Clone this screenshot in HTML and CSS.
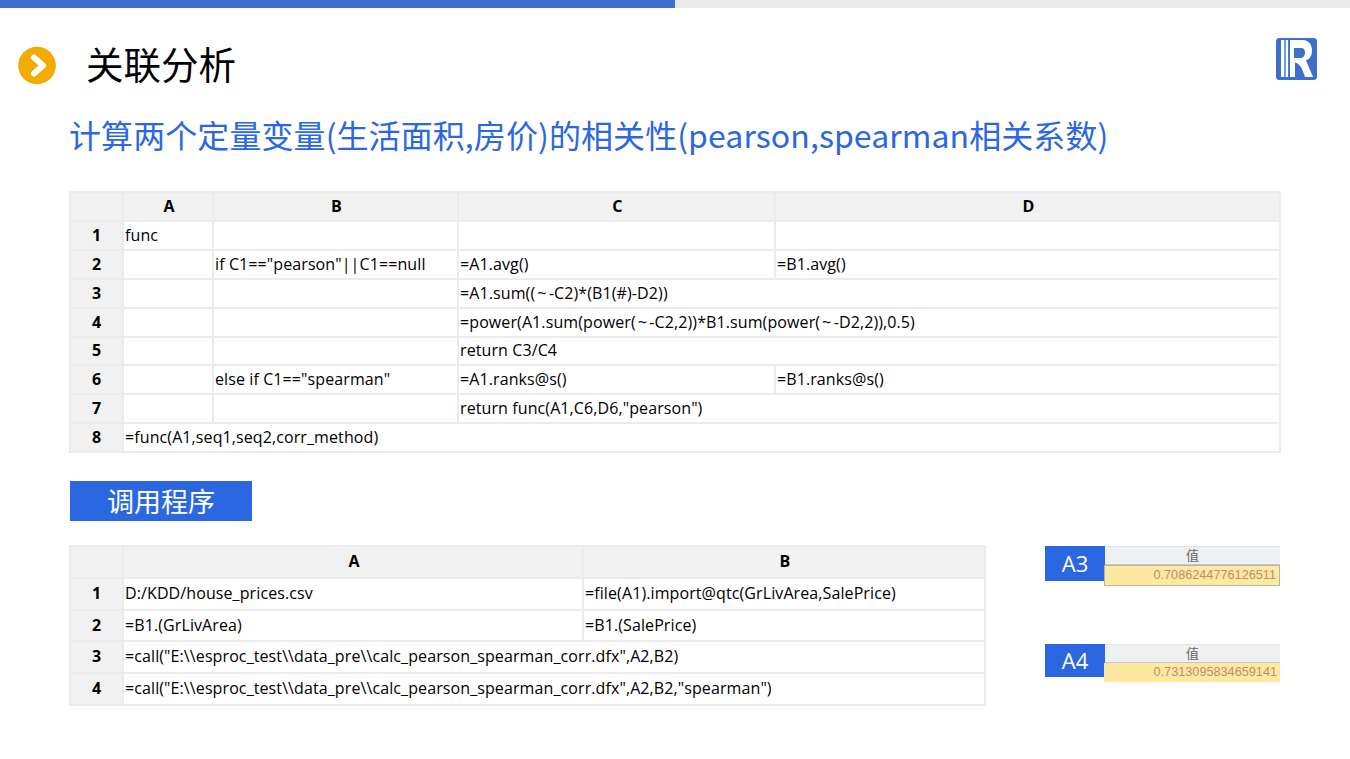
FILE: index.html
```html
<!DOCTYPE html>
<html lang="zh">
<head>
<meta charset="utf-8">
<title>关联分析</title>
<link rel="stylesheet" href="styles.css">
</head>
<body>
<div class="progress"><div class="progress-fill"></div></div>
<header class="head">
  <svg class="bullet" viewBox="0 0 38 38" aria-hidden="true"><circle cx="19" cy="18.500" r="18.800" fill="#f2ab00"/><path d="M16 10.500 L25 18.500 L16 26.500" fill="none" stroke="#fff" stroke-width="6" stroke-linecap="round" stroke-linejoin="round"/></svg>
  <h1 class="title">关联分析</h1>
  <svg class="logo" viewBox="0 0 41 42" aria-hidden="true"><rect width="41" height="42" rx="3.500" fill="#3c6fcb"/><rect x="5" y="2" width="3.300" height="37" fill="#fff"/><rect x="9.700" y="2" width="2.400" height="37" fill="#fff"/><path fill-rule="evenodd" d="M14 2 H27 C33 2 36 7 36 13 C36 18 33.500 21 30 22.500 L37 39 H29 C27 33 25 26 19 24.500 V39 H14 Z M18 10 H25 C28 10 29 12 29 14.500 C29 18 27 20 24 20 H18 Z" fill="#fff"/></svg>
</header>
<h2 class="subtitle">计算两个定量变量(生活面积,房价)的相关性(pearson,spearman相关系数)</h2>
<table class="sheet sheet-main">
  <colgroup><col class="c-idx"><col class="m-a"><col class="m-b"><col class="m-c"><col class="m-d"></colgroup>
  <tr><th></th><th>A</th><th>B</th><th>C</th><th>D</th></tr>
  <tr><th>1</th><td>func</td><td></td><td></td><td></td></tr>
  <tr><th>2</th><td></td><td>if C1=="pearson"||C1==null</td><td>=A1.avg()</td><td>=B1.avg()</td></tr>
  <tr><th>3</th><td></td><td></td><td colspan="2">=A1.sum((<span class="ti">~</span>-C2)*(B1(#)-D2))</td></tr>
  <tr><th>4</th><td></td><td></td><td colspan="2">=power(A1.sum(power(<span class="ti">~</span>-C2,2))*B1.sum(power(<span class="ti">~</span>-D2,2)),0.5)</td></tr>
  <tr class="row-short"><th>5</th><td></td><td></td><td colspan="2">return C3/C4</td></tr>
  <tr><th>6</th><td></td><td>else if C1=="spearman"</td><td>=A1.ranks@s()</td><td>=B1.ranks@s()</td></tr>
  <tr><th>7</th><td></td><td></td><td colspan="2">return func(A1,C6,D6,"pearson")</td></tr>
  <tr><th>8</th><td colspan="4">=func(A1,seq1,seq2,corr_method)</td></tr>
</table>
<div class="tag">调用程序</div>
<section class="lower">
  <table class="sheet sheet-call">
    <colgroup><col class="c-idx"><col class="k-a"><col class="k-b"></colgroup>
    <tr><th></th><th>A</th><th>B</th></tr>
    <tr><th>1</th><td>D:/KDD/house_prices.csv</td><td>=file(A1).import@qtc(GrLivArea,SalePrice)</td></tr>
    <tr class="row-short"><th>2</th><td>=B1.(GrLivArea)</td><td>=B1.(SalePrice)</td></tr>
    <tr><th>3</th><td colspan="2">=call("E:\\esproc_test\\data_pre\\calc_pearson_spearman_corr.dfx",A2,B2)</td></tr>
    <tr><th>4</th><td colspan="2">=call("E:\\esproc_test\\data_pre\\calc_pearson_spearman_corr.dfx",A2,B2,"spearman")</td></tr>
  </table>
  <div class="results">
    <div class="result">
      <div class="result-label">A3</div>
      <div class="result-grid framed"><div class="result-head">值</div><div class="result-value">0.7086244776126511</div></div>
    </div>
    <div class="result">
      <div class="result-label result-label-short">A4</div>
      <div class="result-grid"><div class="result-head">值</div><div class="result-value">0.7313095834659141</div></div>
    </div>
  </div>
</section>
</body>
</html>
```
FILE: styles.css
```css
* { box-sizing: border-box; }
html, body { margin: 0; padding: 0; }
body {
  width: 1350px;
  height: 759px;
  overflow: hidden;
  background: #fff;
  color: #000;
  font-family: "Open Sans", "Noto Sans CJK SC", sans-serif;
}
.progress { height: 8px; background: #e9e9e9; }
.progress-fill { width: 675px; height: 100%; background: #3c6fcb; }
.head {
  display: flex;
  align-items: center;
  height: 116px;
  margin-bottom: -10px;
  padding: 0 33px 0 18px;
}
.bullet { width: 38px; height: 38px; flex: none; margin-top: -1px; overflow: visible; }
.title {
  margin: -6px 0 0 30px;
  font: 400 37.500px/50px "Noto Sans CJK SC", sans-serif;
}
.logo { width: 41px; height: 42px; margin-left: auto; margin-top: -14px; flex: none; }
.subtitle {
  margin: 0 0 0 69px;
  height: 58px;
  font: 400 32px/40px "Noto Sans CJK SC", sans-serif;
  letter-spacing: 0.080px;
  color: #2b67e0;
  white-space: nowrap;
}
.sheet {
  border-collapse: collapse;
  table-layout: fixed;
  font-size: 16px;
  line-height: 20px;
  letter-spacing: 0.100px;
  color: #000;
}
.sheet th, .sheet td {
  border: 2px solid #ebebeb;
  padding: 0 0 2px 1px;
  white-space: nowrap;
  overflow: hidden;
}
.sheet th { background: #f1f1f1; font-weight: 700; text-align: center; padding: 0 0 2px; }
.sheet tr:first-child th { padding-left: 2px; }
.ti { letter-spacing: 2.500px; margin-left: 2px; }
.sheet-main { margin: 19px 0 0 69px; width: 1210px; }
.sheet-main tr { height: 29px; }
.sheet-main .row-short { height: 28px; }
.sheet-call { width: 915px; }
.sheet-call tr { height: 32px; }
.sheet-call .row-short { height: 31px; }
.c-idx { width: 53px; }
.m-a { width: 90px; }
.m-b { width: 245px; }
.m-c { width: 317px; }
.m-d { width: 505px; }
.k-a { width: 460px; }
.k-b { width: 402px; }
.tag {
  width: 182px;
  height: 40px;
  margin: 28px 0 0 70px;
  background: #2b67e0;
  color: #fff;
  font: 400 27px/39px "Noto Sans CJK SC", sans-serif;
  text-align: center;
}
.lower {
  display: flex;
  align-items: flex-start;
  margin: 24px 0 0 69px;
}
.results { margin: 1px 0 0 59px; display: flex; flex-direction: column; gap: 58px; }
.result { display: flex; align-items: flex-start; }
.result-label {
  width: 60px;
  height: 35px;
  background: #2b67e0;
  color: #fff;
  font-size: 22px;
  line-height: 35px;
  text-align: center;
}
.result-label-short { height: 33px; line-height: 33px; }
.result-grid { width: 175px; font-family: "Liberation Sans", "Noto Sans CJK SC", sans-serif; }
.result-head {
  height: 19px;
  background: #eff0f2;
  border-top: 1px solid #e2e4e8;
  border-bottom: 1px solid #c4c8cc;
  color: #666;
  font-size: 13px;
  line-height: 18px;
  text-align: center;
}
.result-value {
  height: 19px;
  margin-left: -1px;
  background: #fde9a0;
  color: #c28b70;
  font-size: 12.700px;
  line-height: 19px;
  text-align: right;
  padding-right: 3px;
}
.framed .result-value { border: 1px solid #b5b5a5; height: 21px; }
```
